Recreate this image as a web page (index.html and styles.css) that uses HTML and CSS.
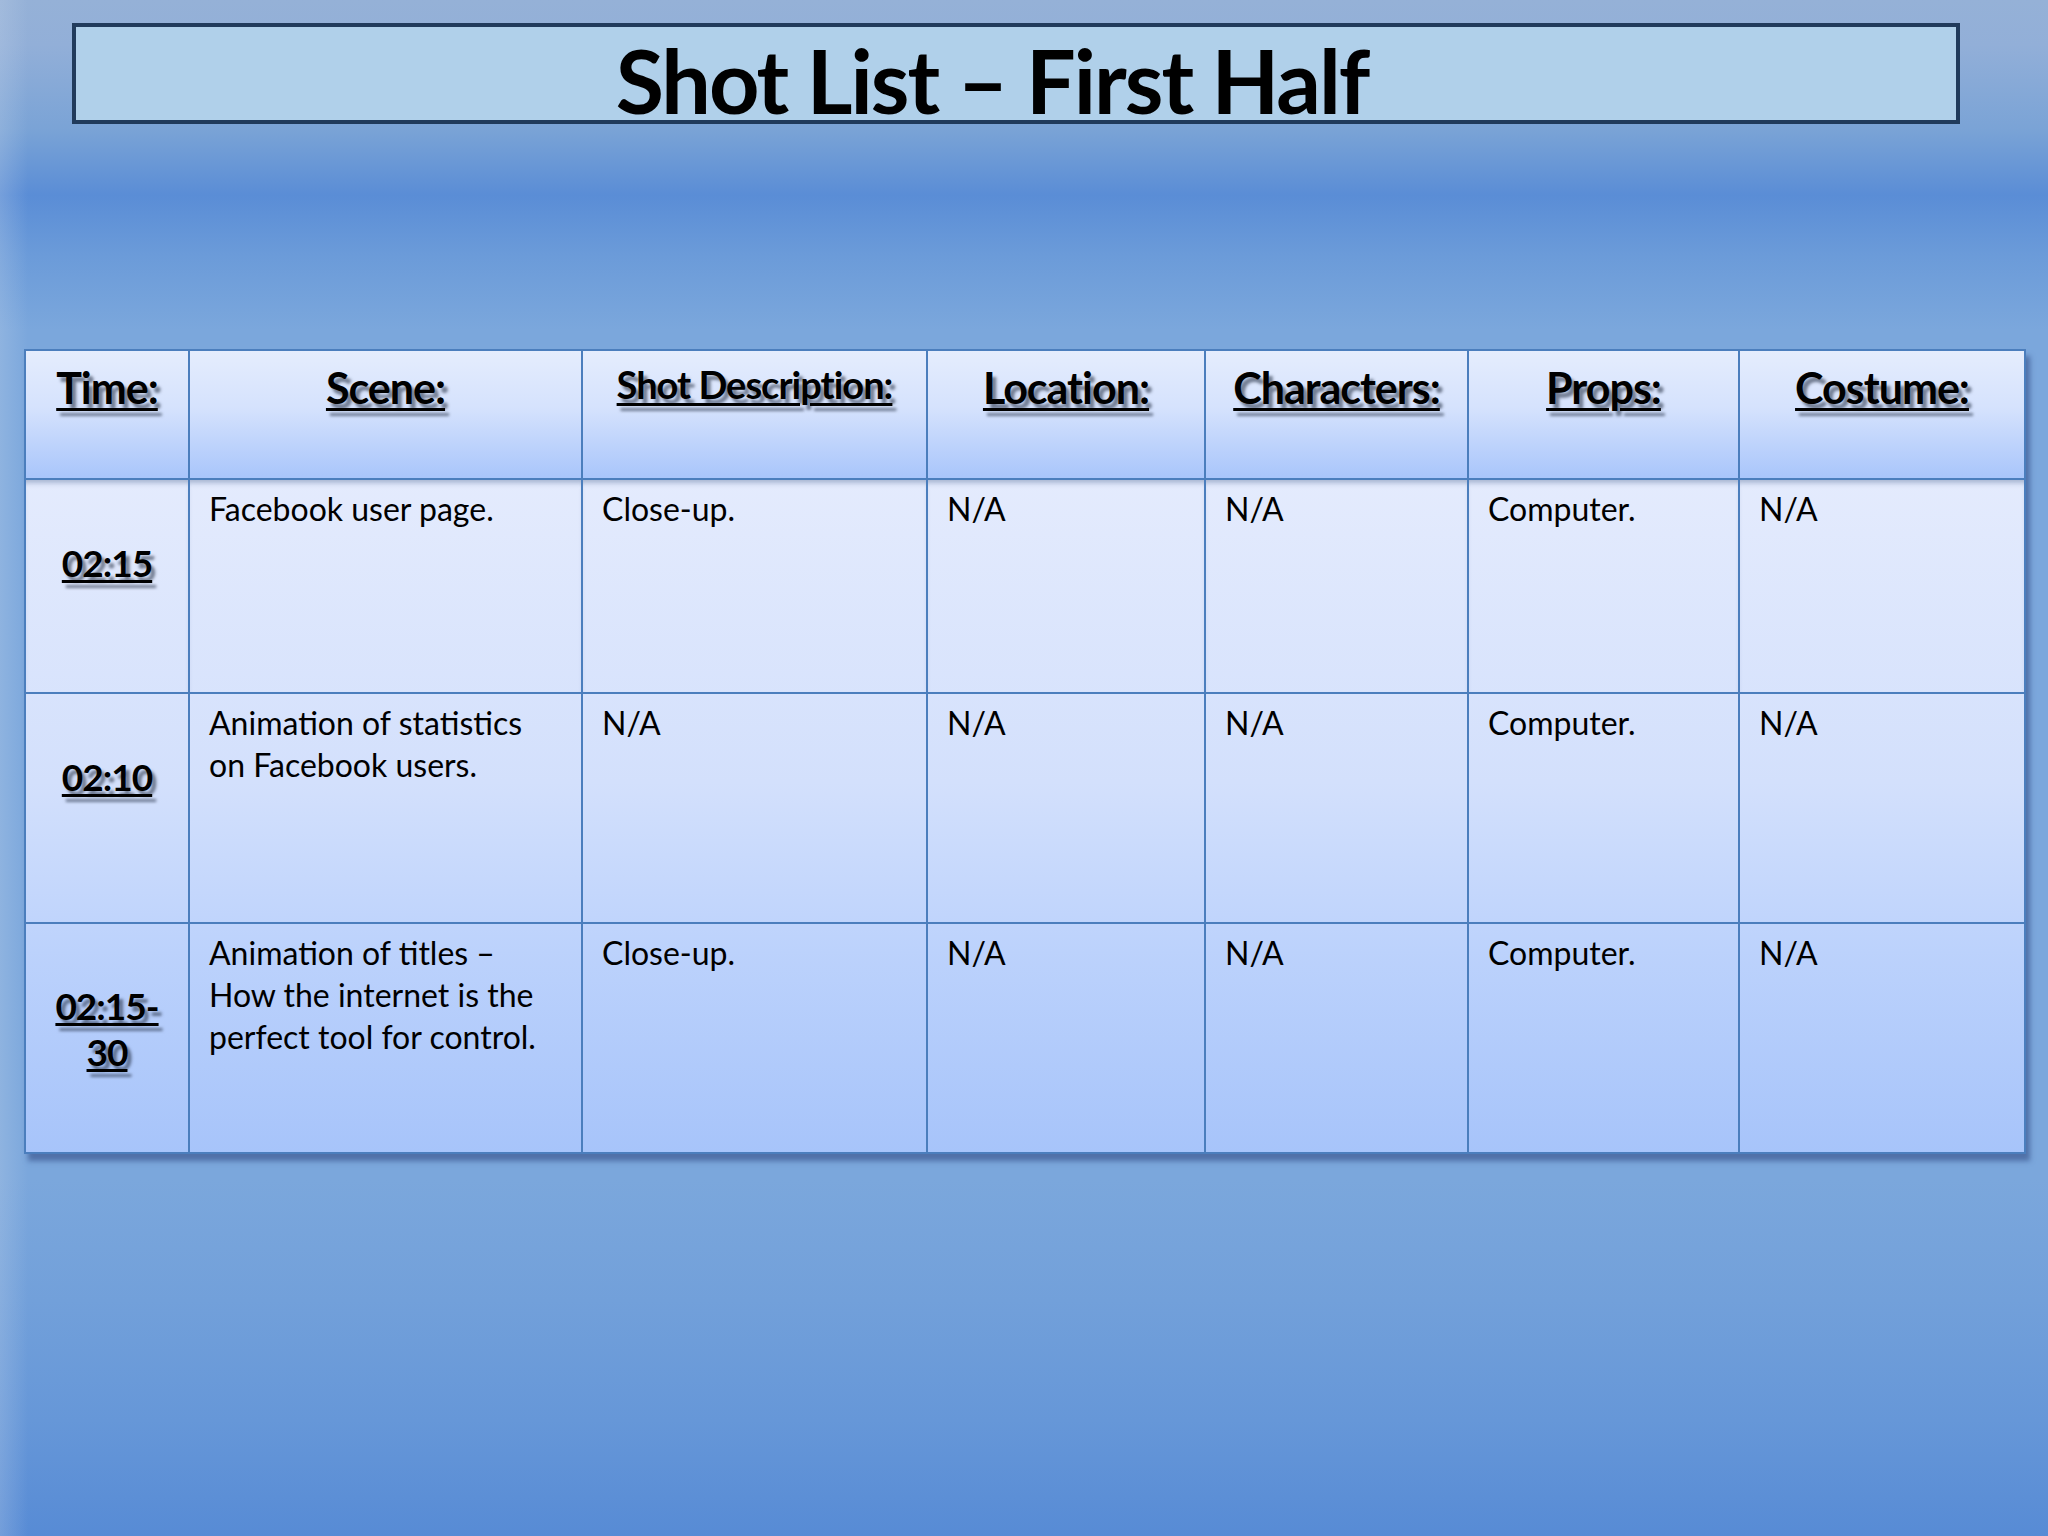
FILE: index.html
```html
<!DOCTYPE html>
<html lang="en">
<head>
<meta charset="utf-8">
<title>Shot List – First Half</title>
<link rel="stylesheet" href="styles.css">
</head>
<body>
<div class="slide">
  <div class="title-box"><h1 class="title">Shot List – First Half</h1></div>
  <table class="shots">
    <colgroup>
      <col class="c-time"><col class="c-scene"><col class="c-desc"><col class="c-loc"><col class="c-char"><col class="c-props"><col class="c-cost">
    </colgroup>
    <thead>
      <tr>
        <th><span class="hd">Time:</span></th>
        <th><span class="hd">Scene:</span></th>
        <th><span class="hd small">Shot Description:</span></th>
        <th><span class="hd">Location:</span></th>
        <th><span class="hd">Characters:</span></th>
        <th><span class="hd">Props:</span></th>
        <th><span class="hd">Costume:</span></th>
      </tr>
    </thead>
    <tbody>
      <tr class="r1">
        <td class="time"><span class="tm">02:15</span></td>
        <td>Facebook user page.</td>
        <td>Close-up.</td>
        <td>N/A</td>
        <td>N/A</td>
        <td>Computer.</td>
        <td>N/A</td>
      </tr>
      <tr class="r2">
        <td class="time"><span class="tm">02:10</span></td>
        <td>Animation of statistics<br>on Facebook users.</td>
        <td>N/A</td>
        <td>N/A</td>
        <td>N/A</td>
        <td>Computer.</td>
        <td>N/A</td>
      </tr>
      <tr class="r3">
        <td class="time"><span class="tm">02:15-<br>30</span></td>
        <td>Animation of titles –<br>How the internet is the<br>perfect tool for control.</td>
        <td>Close-up.</td>
        <td>N/A</td>
        <td>N/A</td>
        <td>Computer.</td>
        <td>N/A</td>
      </tr>
    </tbody>
  </table>
</div>
</body>
</html>
```

FILE: styles.css
```css
html, body {
  margin: 0;
  padding: 0;
}

body {
  width: 2048px;
  height: 1536px;
  overflow: hidden;
  font-family: Lato, "Open Sans", "Liberation Sans", sans-serif;
  color: #000;
  background: linear-gradient(to bottom,
    #95b1d7 0px,
    #92afd8 45px,
    #7aa3d6 130px,
    #5a8dd6 195px,
    #6b9bd9 255px,
    #7ba7dc 330px,
    #7ba7dc 1180px,
    #72a0da 1300px,
    #6697d8 1420px,
    #578bd5 1536px);
}

.slide {
  position: relative;
  width: 2048px;
  height: 1536px;
  padding-top: 23px;
  box-sizing: border-box;
  background: linear-gradient(to right, rgba(200,215,235,0.25) 0px, rgba(200,215,235,0) 28px);
}

.title-box {
  margin-left: 72px;
  width: 1888px;
  height: 101px;
  box-sizing: border-box;
  border: 4px solid #213b5c;
  background: #b0d0ea;
  display: flex;
  align-items: center;
  justify-content: center;
  padding-right: 48px;
}

.title {
  margin: 0;
  font-family: Lato, "Open Sans", sans-serif;
  font-weight: 700;
  font-size: 88px;
  line-height: 1;
  letter-spacing: -2px;
  padding-top: 12px;
}

.shots {
  margin-top: 225px;
  margin-left: 24px;
  width: 2000px;
  border-collapse: collapse;
  table-layout: fixed;
  box-shadow: 4px 7px 5px rgba(45, 70, 125, 0.55);
}

.c-time { width: 164px; }
.c-scene { width: 393px; }
.c-desc { width: 345px; }
.c-loc { width: 278px; }
.c-char { width: 263px; }
.c-props { width: 271px; }
.c-cost { width: 286px; }

.shots th, .shots td {
  border: 2px solid #4b7ebd;
  padding: 0;
}

.shots thead tr {
  height: 129px;
  background: linear-gradient(to bottom, #e5edfd 0%, #d5e2fd 45%, #a8c5fb 100%);
}

.shots th {
  vertical-align: top;
  text-align: center;
  padding-top: 11px;
}

.hd {
  font-weight: 700;
  font-size: 43px;
  line-height: 1.2;
  letter-spacing: -1px;
  text-decoration: underline;
  text-decoration-thickness: 3px;
  text-underline-offset: 4px;
  text-shadow: 4px 5px 3px rgba(30, 40, 60, 0.55);
}

.hd.small {
  font-size: 38px;
  position: relative;
  top: 0px;
}

.shots tbody {
  background: linear-gradient(to bottom, #e4ebfd 0%, #d3e0fc 45%, #bcd2fc 70%, #a7c4fa 100%);
}

.r1 { height: 214px; }
.r2 { height: 230px; }
.r3 { height: 230px; }

.shots td {
  vertical-align: top;
  font-size: 32px;
  line-height: 42px;
  padding: 8px 12px 0 19px;
}

.r1 td {
  box-shadow: inset 0 6px 5px -3px rgba(55, 80, 130, 0.35);
}

.shots td.time {
  vertical-align: middle;
  text-align: center;
  padding: 0 0 46px 0;
}

.r2 td.time {
  padding-bottom: 62px;
}

.r3 td.time {
  padding-bottom: 18px;
}

.tm {
  display: inline-block;
  font-weight: 700;
  font-size: 37px;
  line-height: 46px;
  letter-spacing: -1px;
  text-decoration: underline;
  text-decoration-thickness: 3px;
  text-underline-offset: 3px;
  text-shadow: 4px 5px 3px rgba(30, 40, 60, 0.55);
}
```
